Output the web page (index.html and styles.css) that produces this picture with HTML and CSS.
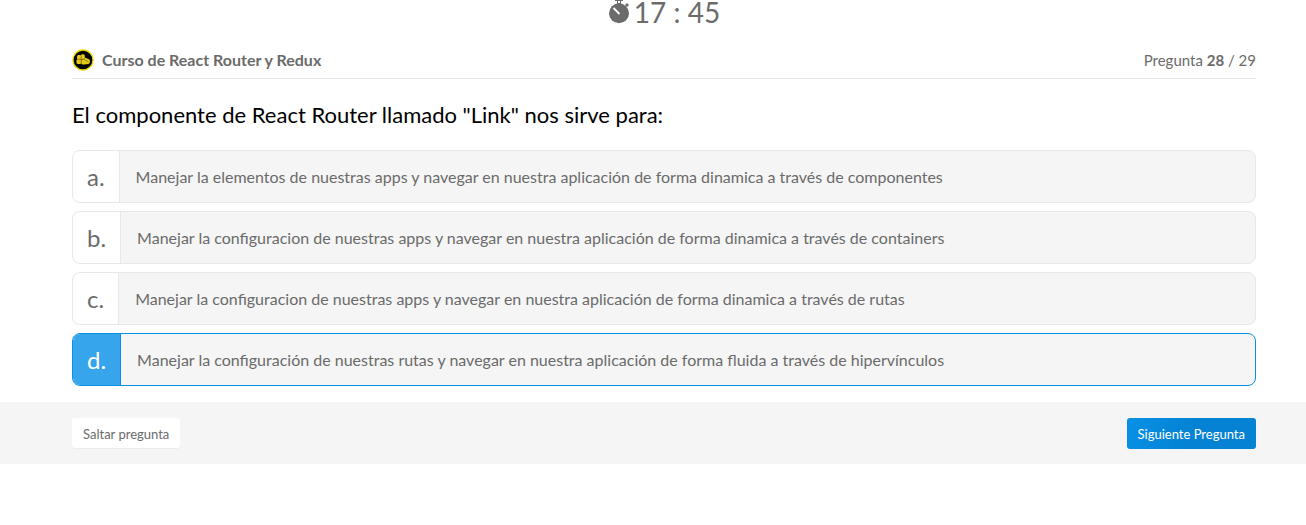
FILE: index.html
```html
<!DOCTYPE html>
<html lang="es">
<head>
<meta charset="utf-8">
<title>Curso de React Router y Redux</title>
<link rel="stylesheet" href="styles.css">
</head>
<body>
<form class="exam">
  <div class="timer">
    <svg class="timer-icon" viewBox="0 0 22 24" aria-hidden="true">
      <path d="M7 0h8v1h-2v3H9V1H7z" fill="#6b6b6b"/>
      <path d="M10 1h2v2h-2z" fill="#fff"/>
      <path d="M17 5l2-2 2 2-2 2z" fill="#6b6b6b"/>
      <circle cx="11" cy="13.3" r="10" fill="#6b6b6b"/>
      <path d="M5.5 8l6 6" stroke="#fff" stroke-width="1.8"/>
    </svg>
    <span>17 : 45</span>
  </div>
  <main class="content">
    <header class="course">
      <svg class="badge" viewBox="0 0 22 22" aria-hidden="true">
        <circle cx="11" cy="11" r="10" fill="#050500" stroke="#e8d800" stroke-width="1.3"/>
        <g fill="#e6cb16">
          <rect x="5" y="6" width="4.5" height="4.5" rx="1.5"/>
          <rect x="8.8" y="5.2" width="4" height="5" rx="1.5"/>
          <rect x="4.5" y="10" width="5" height="5" rx="1.5"/>
          <rect x="9.3" y="10.2" width="4.5" height="5.3" rx="1.5"/>
          <path d="M12.5 8.5l3.5 1.2q2.5 1 2 3.3t-3 2.3h-2.5z"/>
        </g>
        <path d="M5.5 10.3h7.5M9.2 6.5v8.5M13.3 11.5l3 1" stroke="#7a6800" stroke-width=".7" fill="none"/>
      </svg>
      <h2 class="course-name">Curso de React Router y Redux</h2>
      <p class="progress">Pregunta <strong>28</strong> / 29</p>
    </header>
    <fieldset class="question">
      <legend class="question-title">El componente de React Router llamado "Link" nos sirve para:</legend>
      <div class="options">
        <label class="option"><input class="radio" type="radio" name="answer" value="a"><span class="letter">a.</span><span class="answer">Manejar la elementos de nuestras apps y navegar en nuestra aplicación de forma dinamica a través de componentes</span></label>
        <label class="option"><input class="radio" type="radio" name="answer" value="b"><span class="letter">b.</span><span class="answer">Manejar la configuracion de nuestras apps y navegar en nuestra aplicación de forma dinamica a través de containers</span></label>
        <label class="option"><input class="radio" type="radio" name="answer" value="c"><span class="letter">c.</span><span class="answer">Manejar la configuracion de nuestras apps y navegar en nuestra aplicación de forma dinamica a través de rutas</span></label>
        <label class="option"><input class="radio" type="radio" name="answer" value="d" checked><span class="letter">d.</span><span class="answer">Manejar la configuración de nuestras rutas y navegar en nuestra aplicación de forma fluida a través de hipervínculos</span></label>
      </div>
    </fieldset>
  </main>
  <footer class="actions">
    <button class="button" type="button">Saltar pregunta</button>
    <button class="button button-primary" type="button">Siguiente Pregunta</button>
  </footer>
</form>
</body>
</html>
```
FILE: styles.css
```css
* {
  box-sizing: border-box;
}

body {
  margin: 0;
  background: #fff;
  color: #6b6b6b;
  font-family: Lato, "Liberation Sans", sans-serif;
  font-size: 16px;
}

.timer,
.content,
.actions {
  padding-left: 72px;
  padding-right: 50px;
}

.timer {
  display: flex;
  justify-content: center;
  gap: 4px;
  height: 41px;
  font-size: 28px;
  line-height: 24px;
}

.timer-icon {
  width: 22px;
  height: 24px;
}

.course {
  display: flex;
  align-items: center;
  height: 38px;
  border-bottom: 1px solid #e8e8e8;
}

.badge {
  width: 22px;
  height: 22px;
  margin-right: 8px;
}

.course-name {
  margin: 0;
  font-size: 16px;
  font-weight: 700;
}

.progress {
  margin: 0 0 0 auto;
  font-size: 15px;
}

.question {
  min-width: 0;
  margin: 0;
  padding: 0;
  border: 0;
}

.question-title {
  padding: 22px 0 21px;
  color: #000;
  font-size: 22px;
  line-height: 28px;
}

.options {
  display: grid;
  gap: 8px;
}

.option {
  position: relative;
  display: flex;
  min-height: 53px;
  overflow: hidden;
  border: 1px solid #e8e8e8;
  border-radius: 8px;
  background: #f5f5f5;
  cursor: pointer;
}

.radio {
  position: absolute;
  opacity: 0;
}

.letter {
  display: flex;
  align-items: center;
  padding: 0 14px;
  border-right: 1px solid #e8e8e8;
  background: #fff;
  font-size: 24px;
}

.answer {
  align-self: center;
  padding: 8px 16px;
}

.option:has(.radio:checked) {
  border-color: #0791e6;
}

.radio:checked + .letter {
  border-color: #0791e6;
  background: #37a5eb;
  color: #fff;
}

.actions {
  display: flex;
  justify-content: space-between;
  margin-top: 16px;
  padding-top: 16px;
  padding-bottom: 15px;
  background: #f5f5f5;
}

.button {
  height: 31px;
  padding: 0 11px;
  border: 0;
  border-radius: 3px;
  background: #fff;
  box-shadow: inset 0 -1px 0 #ececec;
  color: #6b6b6b;
  font-family: inherit;
  font-size: 13px;
}

.button-primary {
  background: linear-gradient(110deg, #0791e6, #0582d3 50%);
  box-shadow: none;
  color: #fff;
}
```
